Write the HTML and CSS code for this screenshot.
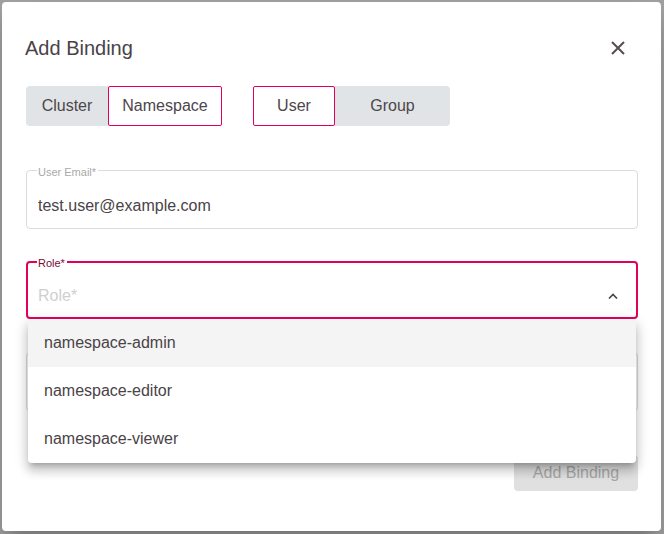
FILE: index.html
```html
<!DOCTYPE html>
<html>
<head>
<meta charset="utf-8">
<link rel="stylesheet" href="styles.css">
</head>
<body>
<div class="backdrop">
  <div class="modal">
    <div class="header">
      <h2 class="title">Add Binding</h2>
      <button class="close" aria-label="Close">
        <svg width="14" height="14" viewBox="0 0 14 14"><path d="M1 1 L13 13 M13 1 L1 13" stroke="#554d53" stroke-width="2" fill="none"/></svg>
      </button>
    </div>
    <div class="toggles">
      <div class="group">
        <span class="seg w82">Cluster</span>
        <span class="seg w114 on">Namespace</span>
      </div>
      <div class="group">
        <span class="seg w82 on">User</span>
        <span class="seg w115">Group</span>
      </div>
    </div>
    <fieldset class="field">
      <legend>User Email*</legend>
      <div class="value">test.user@example.com</div>
    </fieldset>
    <div class="select-wrap">
      <fieldset class="field focus">
        <legend>Role*</legend>
        <div class="value placeholder">Role*
          <svg class="chev" width="10" height="6" viewBox="0 0 10 6"><path d="M1 5.5 L5 1.5 L9 5.5" stroke="#4a4347" stroke-width="1.6" fill="none"/></svg>
        </div>
      </fieldset>
      <ul class="menu">
        <li class="hl">namespace-admin</li>
        <li>namespace-editor</li>
        <li>namespace-viewer</li>
      </ul>
    </div>
    <div class="field hidden-field"></div>
    <div class="actions">
      <button class="submit" disabled>Add Binding</button>
    </div>
  </div>
</div>
</body>
</html>
```
FILE: styles.css
```css
* { box-sizing: border-box; }
html, body { margin: 0; padding: 0; }
body {
  width: 664px; height: 534px; overflow: hidden;
  background: #a1a1a1;
  font-family: "Liberation Sans", Arial, sans-serif;
  color: #4d464b;
}
.backdrop { padding: 2px 3px 3px 2px; height: 534px; }
.modal {
  width: 659px; height: 529px;
  background: #fff;
  border-radius: 4px;
  padding: 26px 23px 0 23px;
  box-shadow: 0 11px 15px -7px rgba(0,0,0,.2), 0 24px 38px 3px rgba(0,0,0,.14);
}
.header { display: flex; justify-content: space-between; align-items: center; height: 40px; }
.title { margin: 0; font-size: 20px; font-weight: 500; line-height: 24px; color: #4a4347; padding-left: 0; }
.close {
  width: 40px; height: 40px; border: 0; background: none; padding: 0;
  display: flex; align-items: center; justify-content: center;
}
.toggles { display: flex; gap: 31px; margin-top: 18px; padding-left: 1px; }
.group { display: flex; background: #e1e4e7; border-radius: 4px; height: 40px; }
.seg {
  display: flex; align-items: center; justify-content: center;
  font-size: 16px; color: #4d464b; border: 1px solid transparent; border-radius: 2px;
}
.seg.on { background: #fff; border-color: #e2005f; }
.w82 { width: 82px; }
.w114 { width: 114px; }
.w115 { width: 115px; }
.field {
  margin: 38px 0 0 1px; padding: 0 11px 0 11px;
  border: 1px solid #dcdcdc; border-radius: 4px;
  min-width: 0; width: 612px;
}
.field legend {
  font-size: 11px; line-height: 12px; color: #a9a9a9; padding: 0 2px 0 1px; margin-left: -1px;
  position: relative; top: 2px;
}
.field .value {
  padding: 20px 0 12px; font-size: 16px; line-height: 20px; color: #4a4347;
  display: flex; justify-content: space-between; align-items: center;
}
.select-wrap { position: relative; margin-top: 27px; }
.select-wrap .field { margin-top: 0; }
.field.focus { border: 2px solid #e2005f; padding: 0 10px; }
.field.focus legend { color: #7a0a37; top: 1px; }
.field.focus .value { padding: 18px 0 11px; }
.placeholder { color: #cfcfcf !important; }
.chev { margin-right: 8px; }
.hidden-field { margin-top: 33px; height: 59px; }
.menu {
  position: absolute; top: 100%; left: 3px; width: 608px;
  margin: 0; padding: 0; list-style: none; background: #fff; border-radius: 4px;
  box-shadow: 0 5px 5px -3px rgba(0,0,0,.2), 0 8px 10px 1px rgba(0,0,0,.14), 0 3px 14px 2px rgba(0,0,0,.12);
  z-index: 2;
}
.menu li { height: 48px; display: flex; align-items: center; padding-left: 16px; font-size: 16px; color: #4a4347; }
.menu li.hl { background: #f4f4f4; }
.actions { display: flex; justify-content: flex-end; margin-top: 44px; }
.submit {
  width: 124px; height: 36px; border: 0; border-radius: 4px; background: #e0e0e0;
  color: #a6a6a6; font-family: "Liberation Sans", Arial, sans-serif; font-size: 16px;
}
```
